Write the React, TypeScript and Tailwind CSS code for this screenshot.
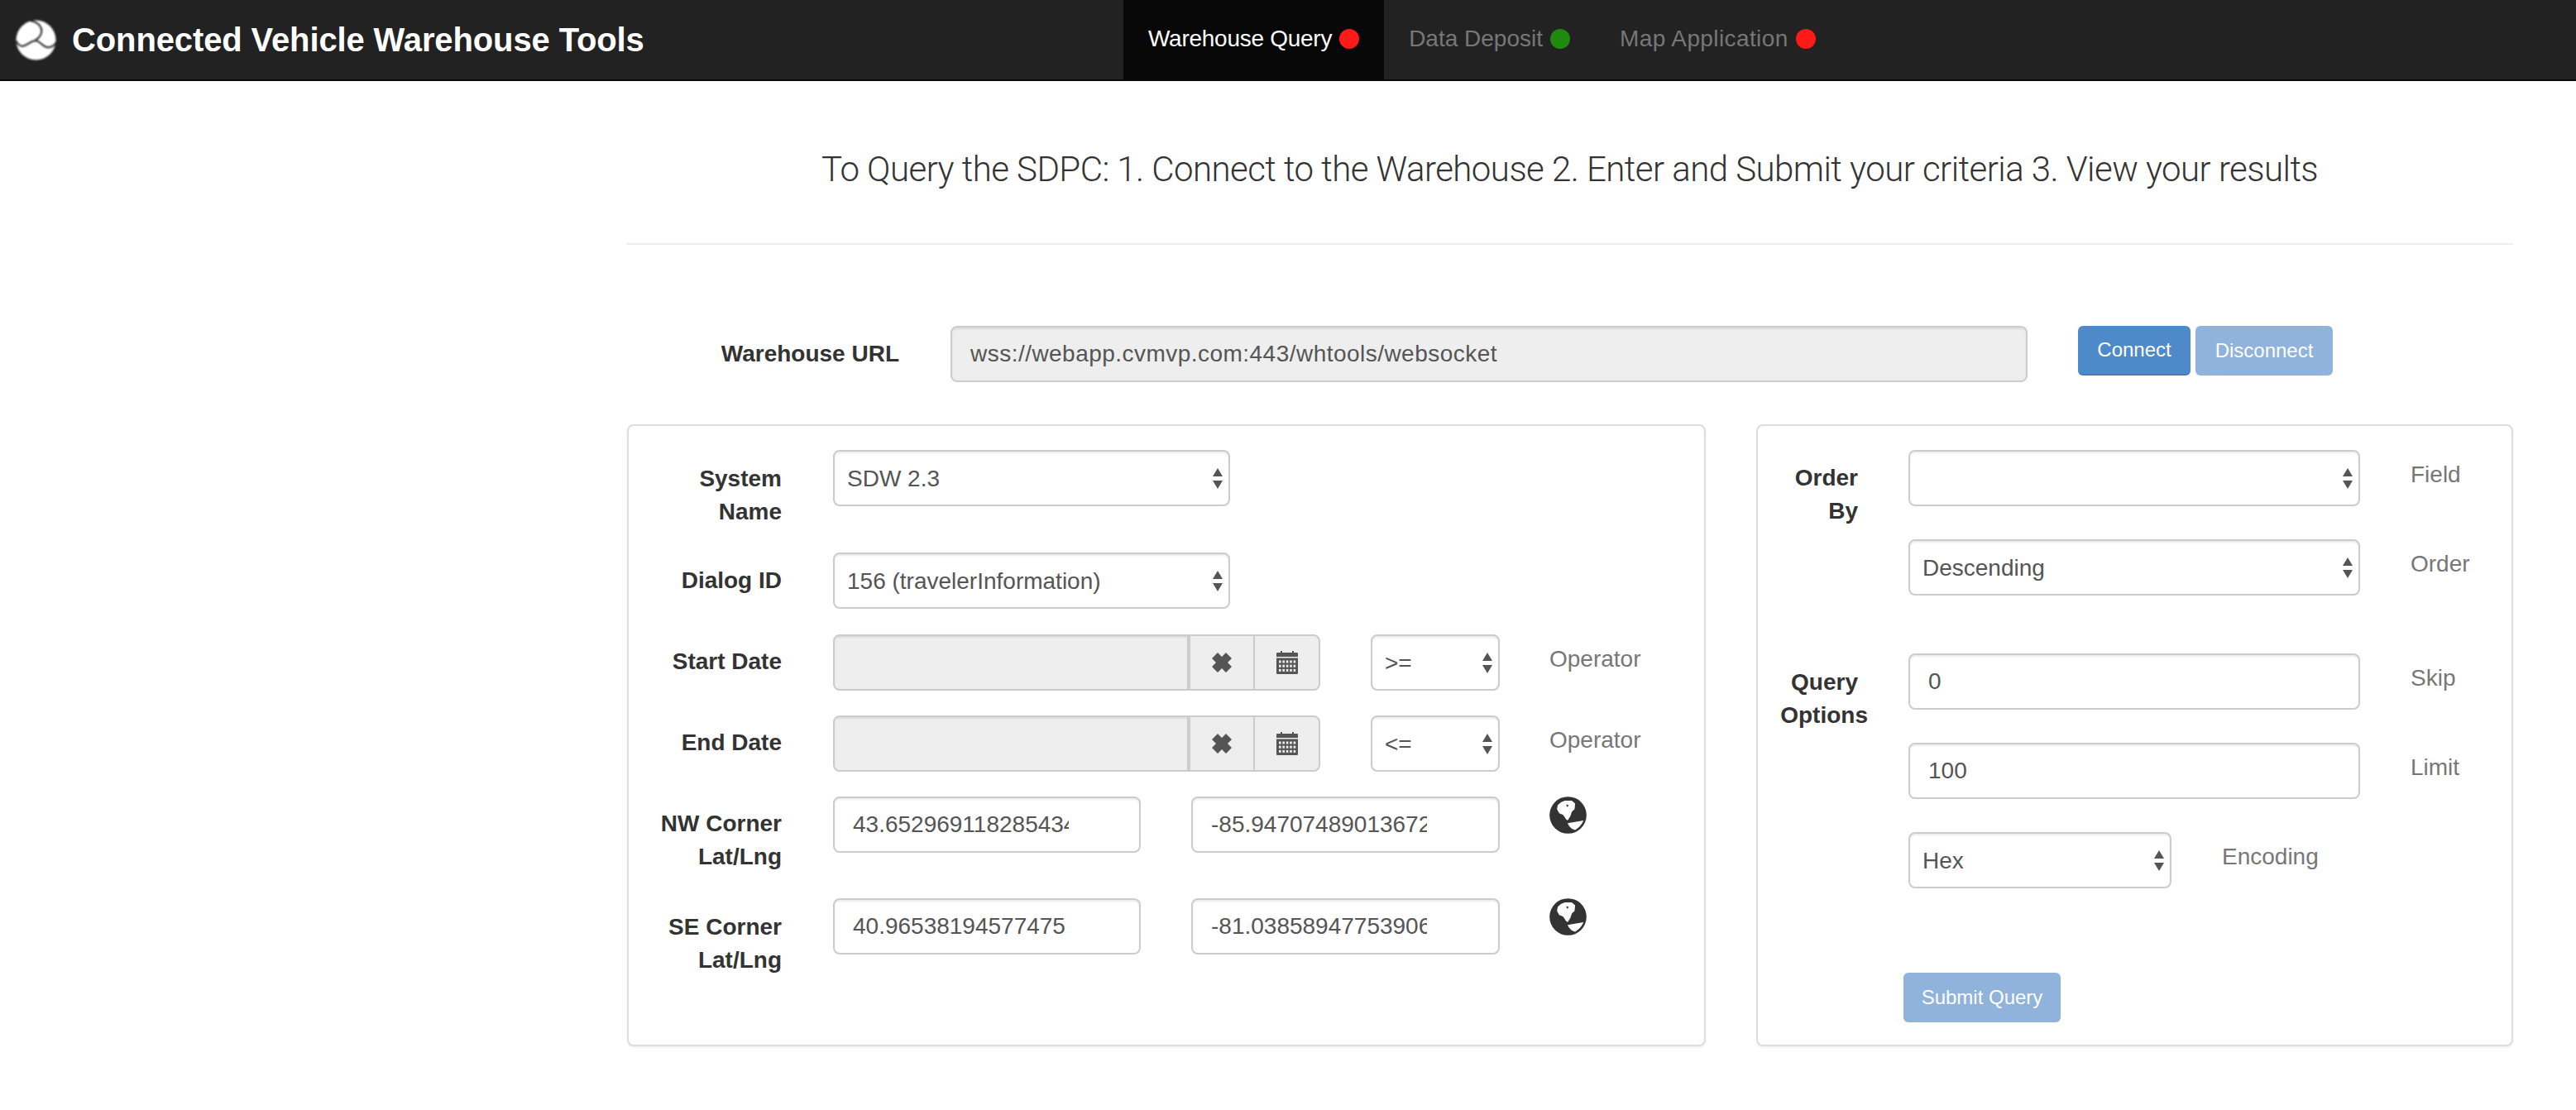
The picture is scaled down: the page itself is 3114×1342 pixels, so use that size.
import React from "react";

function Logo() {
  return (
    <svg width="49" height="49" viewBox="0 0 147 147" className="shrink-0 blur-[0.8px]">
      <circle cx="73.5" cy="73.5" r="72" fill="#fff" />
      <g fill="none" stroke="#222" strokeWidth="6" strokeLinecap="round">
        <path d="M52 3 C 84 8 102 30 90 55 C 85 65 78 70 72 73" />
        <path d="M74 76 C 90 78 100 102 120 100 C 130 99 140 92 147 82" />
        <path d="M70 76 C 55 75 45 92 25 95 C 15 96 8 88 2 78" />
      </g>
    </svg>
  );
}

function Arrows() {
  return (
    <svg width="12" height="25" viewBox="0 0 12 25" className="absolute right-[9px] top-[22px] pointer-events-none">
      <path d="M6 0 L12 10 L0 10 Z M0 15 L12 15 L6 25 Z" fill="#555" />
    </svg>
  );
}

function Select({ value, width }: { value: string; width: string }) {
  return (
    <div className={`relative h-[68px] shrink-0 ${width}`}>
      <select
        defaultValue={value}
        className="h-full w-full appearance-none rounded-lg border-2 border-[#ccc] bg-white pl-[15px] pr-[30px] pt-[1px] text-[28px] text-[#555] shadow-[inset_0_2px_2px_rgba(0,0,0,0.075)] outline-none"
      >
        <option value={value}>{value}</option>
      </select>
      <Arrows />
    </div>
  );
}

function TextInput({ value, width, className = "pr-[22px] bg-white" }: { value: string; width: string; className?: string }) {
  return (
    <input
      readOnly
      value={value}
      className={`h-[68px] shrink-0 rounded-lg border-2 border-[#ccc] pl-[22px] text-[28px] text-[#555] shadow-[inset_0_2px_2px_rgba(0,0,0,0.075)] outline-none ${width} ${className}`}
    />
  );
}

function RemoveIcon() {
  return (
    <svg width="24" height="24" viewBox="0 0 24 24">
      <path d="M0 7 L7 0 L12 5 L17 0 L24 7 L19 12 L24 17 L17 24 L12 19 L7 24 L0 17 L5 12 Z" fill="#555" />
    </svg>
  );
}

function CalendarIcon() {
  return (
    <svg width="26" height="28" viewBox="0 0 26 28">
      <path d="M5 0h2v3H5zM19 0h2v3h-2z" fill="#555" />
      <path d="M1 2h24a1 1 0 0 1 1 1v24a1 1 0 0 1-1 1H1a1 1 0 0 1-1-1V3a1 1 0 0 1 1-1z" fill="#555" />
      <rect x="0" y="7" width="26" height="1.5" fill="#eee" />
      {[0, 1, 2].map((r) =>
        [0, 1, 2, 3, 4].map((c) => (
          <rect key={`${r}-${c}`} x={3 + c * 4.4} y={11.5 + r * 5.2} width="2.6" height="3" fill="#eee" />
        )),
      )}
    </svg>
  );
}

function GlobeIcon() {
  return (
    <svg width="45" height="45" viewBox="0 0 133 133" className="shrink-0">
      <circle cx="66.5" cy="66.5" r="66" fill="#333" />
      <path
        fill="#fff"
        d="M27 45 L30 30 Q 42 18 55 15 L80 15 L92 25 L90 45 L80 55 L75 70 L65 86 L58 80 L55 74 L48 65 L35 60 Z"
      />
      <path fill="#333" d="M60 28 L70 32 L63 38 Z" />
      <path fill="#fff" d="M65 95 L95 90 L122 86 Q 112 108 92 120 L80 115 L70 105 Z" />
    </svg>
  );
}

function DateGroup() {
  return (
    <div className="flex h-[68px] w-[589px] shrink-0 overflow-hidden rounded-lg border-2 border-[#ccc] bg-[#eee]">
      <div className="h-full w-[430px] border-r-4 border-[#ccc] shadow-[inset_0_2px_2px_rgba(0,0,0,0.075)]" />
      <div className="flex h-full w-[78px] items-center justify-center border-r-2 border-[#ccc]">
        <RemoveIcon />
      </div>
      <div className="flex h-full flex-1 items-center justify-center">
        <CalendarIcon />
      </div>
    </div>
  );
}

function Label({ children, width, pad }: { children: React.ReactNode; width: string; pad: string }) {
  return <div className={`shrink-0 text-right font-bold text-[#333] ${width} ${pad}`}>{children}</div>;
}

function Hint({ children, className }: { children: React.ReactNode; className: string }) {
  return <div className={`pt-[10px] text-[#777] ${className}`}>{children}</div>;
}

function NavItem({ label, color, tracking, active }: { label: string; color: string; tracking: string; active?: boolean }) {
  return (
    <div className={`flex h-[96px] items-center gap-[9px] px-[30px] pb-[3px] ${tracking} ${active ? "bg-[#080808] text-white" : "text-[#777]"}`}>
      <span>{label}</span>
      <span className={`h-[24px] w-[24px] rounded-full ${color}`} />
    </div>
  );
}

export default function App() {
  return (
    <div className="min-h-[1342px] bg-white font-['Liberation_Sans',Arial,sans-serif] text-[28px] leading-[40px] text-[#333]">
      <nav className="flex h-[98px] border-b-2 border-[#080808] bg-[#222]">
        <div className="flex w-[1358px] items-center gap-[19px] pl-[19px]">
          <Logo />
          <span className="text-[40px] font-bold tracking-[-0.12px] text-white">Connected Vehicle Warehouse Tools</span>
        </div>
        <NavItem label="Warehouse Query" color="bg-[#ff1a1a]" tracking="tracking-[-0.27px]" active />
        <NavItem label="Data Deposit" color="bg-[#1f8a0f]" tracking="tracking-[0px]" />
        <NavItem label="Map Application" color="bg-[#ff1a1a]" tracking="tracking-[0.4px]" />
      </nav>

      <main className="pl-[757px] pr-[76px]">
        <h2 className="pt-[78px] text-center font-['Roboto',sans-serif] text-[42px] font-light leading-[58px] tracking-[-0.55px] text-[#333]">
          To Query the SDPC: 1. Connect to the Warehouse 2. Enter and Submit your criteria 3. View your results
        </h2>
        <hr className="mt-[60px] border-t-2 border-[#eee]" />

        <div className="mt-[98px] flex items-start">
          <div className="w-[330px] text-right font-bold leading-[68px]">Warehouse URL</div>
          <div className="ml-[62px]">
            <TextInput
              value="wss://webapp.cvmvp.com:443/whtools/websocket"
              width="w-[1302px]"
              className="bg-[#eee] pr-[22px] tracking-[0.47px]"
            />
          </div>
          <button className="ml-[61px] h-[60px] w-[136px] rounded-md border-b-2 border-[#437dbb] bg-[#4e8ac9] text-[24px] text-white">
            Connect
          </button>
          <button className="ml-[6px] h-[60px] w-[166px] rounded-md bg-[#8fb3da] text-[24px] text-white">
            Disconnect
          </button>
        </div>

        <div className="mt-[51px] flex gap-[61px]">
          <section className="ml-[1px] h-[752px] w-[1304px] shrink-0 rounded-lg border-2 border-[#ddd] pt-[29px] shadow-[0_2px_2px_rgba(0,0,0,0.05)]">
            <div className="flex h-[124px] gap-[62px]">
              <Label width="w-[185px]" pad="pt-[15px]">System<br />Name</Label>
              <Select value="SDW 2.3" width="w-[480px]" />
            </div>
            <div className="flex h-[99px] gap-[62px]">
              <Label width="w-[185px]" pad="pt-[14px]">Dialog ID</Label>
              <Select value="156 (travelerInformation)" width="w-[480px]" />
            </div>
            <div className="flex h-[98px]">
              <Label width="w-[185px]" pad="pt-[13px]">Start Date</Label>
              <div className="ml-[62px]"><DateGroup /></div>
              <div className="ml-[61px]"><Select value=">=" width="w-[156px]" /></div>
              <Hint className="ml-[60px]">Operator</Hint>
            </div>
            <div className="flex h-[98px]">
              <Label width="w-[185px]" pad="pt-[13px]">End Date</Label>
              <div className="ml-[62px]"><DateGroup /></div>
              <div className="ml-[61px]"><Select value="<=" width="w-[156px]" /></div>
              <Hint className="ml-[60px]">Operator</Hint>
            </div>
            <div className="flex h-[123px]">
              <Label width="w-[185px]" pad="pt-[13px]">NW Corner<br />Lat/Lng</Label>
              <div className="ml-[62px]"><TextInput value="43.652969118285434" width="w-[372px]" className="bg-white pr-[85px]" /></div>
              <div className="ml-[61px]"><TextInput value="-85.94707489013672" width="w-[373px]" className="bg-white pr-[86px]" /></div>
              <div className="ml-[60px]"><GlobeIcon /></div>
            </div>
            <div className="flex">
              <Label width="w-[185px]" pad="pt-[15px]">SE Corner<br />Lat/Lng</Label>
              <div className="ml-[62px]"><TextInput value="40.96538194577475" width="w-[372px]" className="bg-white pr-[85px]" /></div>
              <div className="ml-[61px]"><TextInput value="-81.03858947753906" width="w-[373px]" className="bg-white pr-[86px]" /></div>
              <div className="ml-[60px]"><GlobeIcon /></div>
            </div>
          </section>

          <section className="h-[752px] w-[915px] shrink-0 rounded-lg border-2 border-[#ddd] pt-[29px] shadow-[0_2px_2px_rgba(0,0,0,0.05)]">
            <div className="flex h-[108px]">
              <Label width="w-[121px]" pad="pt-[14px]">Order<br />By</Label>
              <div className="ml-[61px]"><Select value="" width="w-[546px]" /></div>
              <Hint className="ml-[61px]">Field</Hint>
            </div>
            <div className="flex h-[138px]">
              <div className="w-[121px] shrink-0" />
              <div className="ml-[61px]"><Select value="Descending" width="w-[546px]" /></div>
              <Hint className="ml-[61px]">Order</Hint>
            </div>
            <div className="flex h-[108px]">
              <Label width="w-[121px]" pad="pt-[15px]">Query<br /><span className="-mr-[12px] inline-block">Options</span></Label>
              <div className="ml-[61px]"><TextInput value="0" width="w-[546px]" /></div>
              <Hint className="ml-[61px]">Skip</Hint>
            </div>
            <div className="flex h-[108px]">
              <div className="w-[121px] shrink-0" />
              <div className="ml-[61px]"><TextInput value="100" width="w-[546px]" /></div>
              <Hint className="ml-[61px]">Limit</Hint>
            </div>
            <div className="flex h-[170px]">
              <div className="w-[121px] shrink-0" />
              <div className="ml-[61px]"><Select value="Hex" width="w-[318px]" /></div>
              <Hint className="ml-[61px]">Encoding</Hint>
            </div>
            <button className="ml-[176px] h-[60px] w-[190px] rounded-md bg-[#8fb3da] text-[24px] text-white">
              Submit Query
            </button>
          </section>
        </div>
      </main>
    </div>
  );
}
